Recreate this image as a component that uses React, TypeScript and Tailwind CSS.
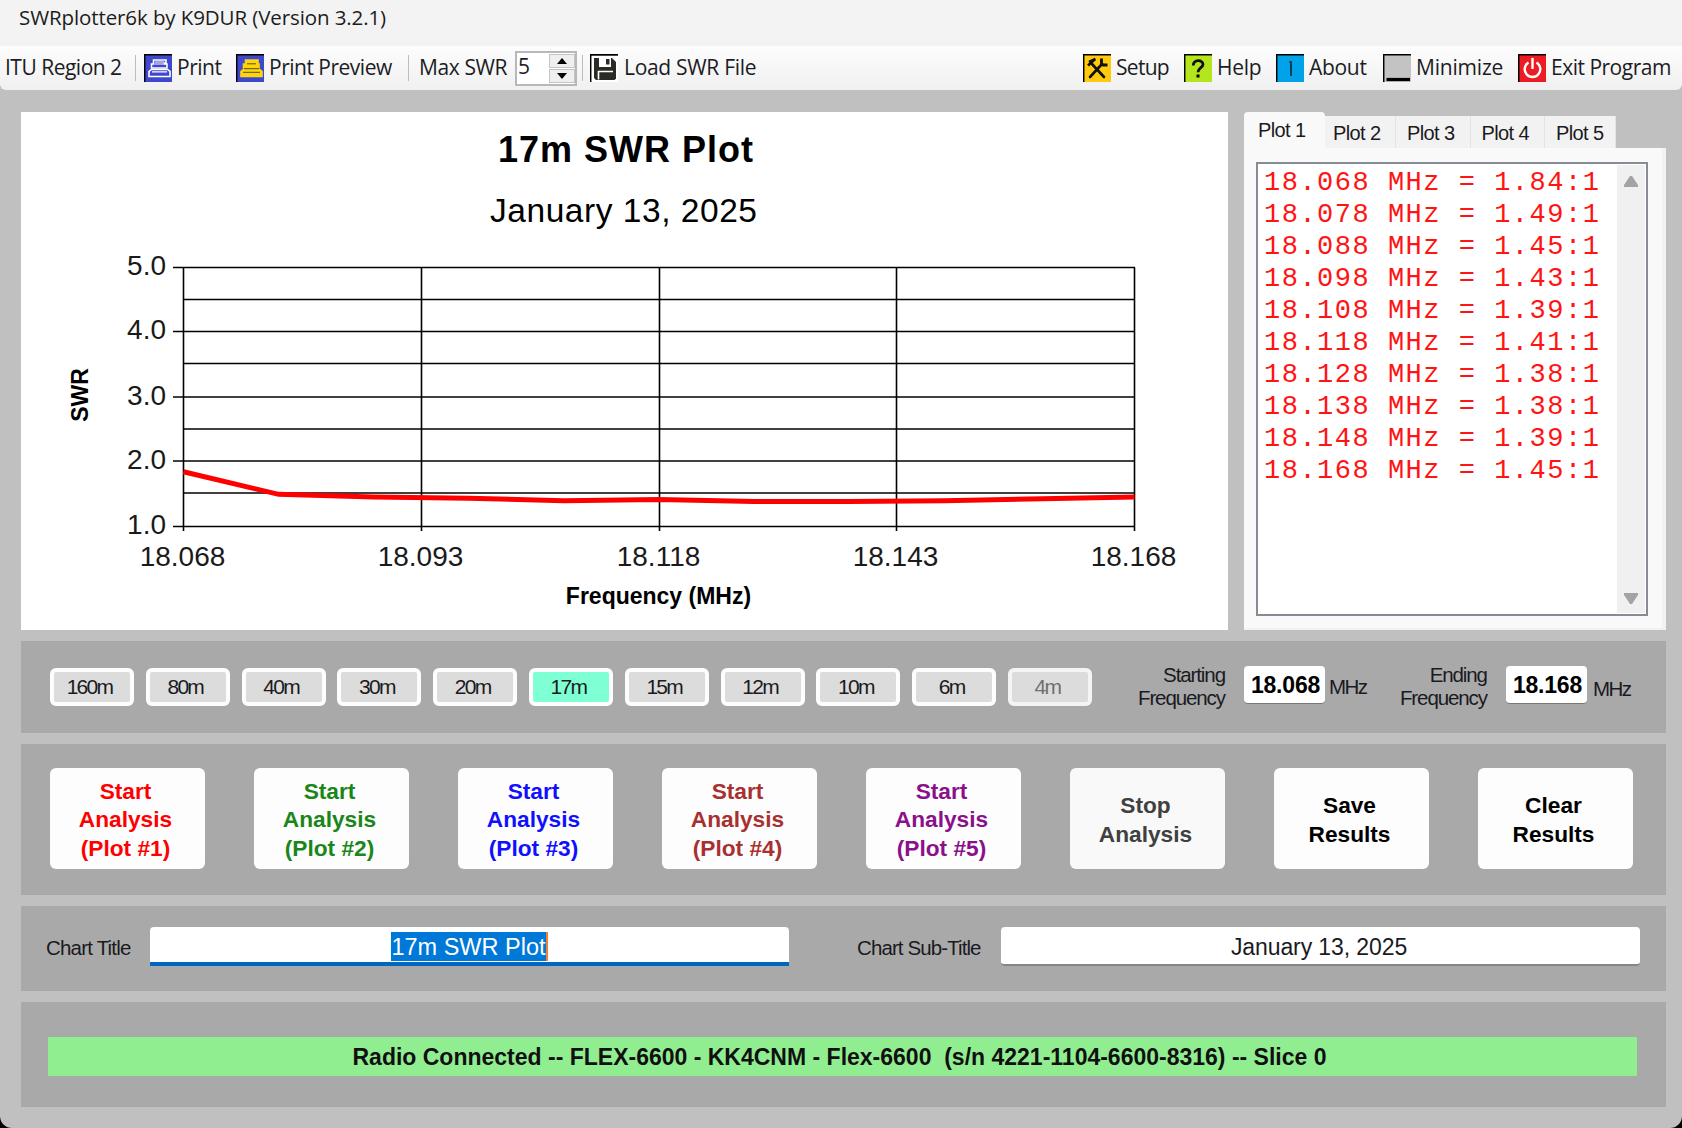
import type { ReactNode } from 'react'
import clsx from 'clsx'

const readings = [
    { freq: 18.068, swr: 1.84 },
    { freq: 18.078, swr: 1.49 },
    { freq: 18.088, swr: 1.45 },
    { freq: 18.098, swr: 1.43 },
    { freq: 18.108, swr: 1.39 },
    { freq: 18.118, swr: 1.41 },
    { freq: 18.128, swr: 1.38 },
    { freq: 18.138, swr: 1.38 },
    { freq: 18.148, swr: 1.39 },
    { freq: 18.168, swr: 1.45 },
]

const bands = ['160m', '80m', '40m', '30m', '20m', '17m', '15m', '12m', '10m', '6m', '4m']

const actions = [
    { lines: ['Start', 'Analysis', '(Plot #1)'], color: 'text-[#ff0000]' },
    { lines: ['Start', 'Analysis', '(Plot #2)'], color: 'text-[#1a861a]' },
    { lines: ['Start', 'Analysis', '(Plot #3)'], color: 'text-[#1010ff]' },
    { lines: ['Start', 'Analysis', '(Plot #4)'], color: 'text-[#a83030]' },
    { lines: ['Start', 'Analysis', '(Plot #5)'], color: 'text-[#8b108b]' },
    { lines: ['Stop', 'Analysis'], color: 'text-[#404040]', disabled: true },
    { lines: ['Save', 'Results'], color: 'text-black' },
    { lines: ['Clear', 'Results'], color: 'text-black' },
]

function IconBox({ bg, children }: { bg: string; children?: ReactNode }) {
    return (
        <svg viewBox="0 0 28 28" className="h-7 w-7 shrink-0">
            <rect width="28" height="28" fill={bg} />
            <path d="M0 .7H28M.7 0V28" stroke="#000" strokeWidth="1.5" />
            {children}
        </svg>
    )
}

function PrinterIcon({ filled }: { filled?: boolean }) {
    const color = filled ? '#ffd40a' : '#ffffff'

    return (
        <IconBox bg="#3f48cc">
            <g fill={filled ? color : 'none'} stroke={color} strokeWidth="1.6">
                <path d="M9.5 6H22V9H20.5V10H23V14H7.500V10H9.500Z" />
                <path d="M5 22.500V17.500L7.500 15.500H23.500L26 17.500V22.500Z" />
            </g>
            {filled ? (
                <path d="M11 9.800H20M7 18.300H24M8 14.700H23" stroke="#55511f" strokeWidth="1" />
            ) : (
                <path d="M10.500 10H20.500M8 17.800H23M11 8H20" stroke={color} strokeWidth="1.200" />
            )}
        </IconBox>
    )
}

function FloppyIcon() {
    return (
        <IconBox bg="#fff">
            <path d="M4 4H22L26 8V24.5L24.5 26H6L4 24Z" fill="#2b2b26" />
            <path d="M9 3H21V13H9Z" fill="#fff" />
            <path d="M16 5H19.5V10.5H16Z" fill="#2b2b26" />
            <path d="M0 .7H28" stroke="#000" strokeWidth="1.5" />
            <path d="M8.5 25.5V17.5H23" fill="none" stroke="#fff" strokeWidth="1.6" />
        </IconBox>
    )
}

function ToolsIcon() {
    return (
        <IconBox bg="#ffc90e">
            <path d="M9 10L21 23" stroke="#111" strokeWidth="2.6" strokeLinecap="round" />
            <path d="M7 23L19 10" stroke="#111" strokeWidth="2.6" strokeLinecap="round" />
            <path d="M5 11.5L11.5 5.5M6 8L12.5 5" stroke="#111" strokeWidth="2.8" />
            <path d="M18.5 4.5V9.5L20 11H24.5" fill="none" stroke="#111" strokeWidth="2.8" />
        </IconBox>
    )
}

function PowerIcon() {
    return (
        <IconBox bg="#ed1c24">
            <path d="M10.500 8.500A7.800 7.800 0 1 0 18.500 8.500M14.500 4V15" fill="none" stroke="#fff" strokeWidth="2.400" />
        </IconBox>
    )
}

function Separator() {
    return <div className="h-[26px] w-px shrink-0 bg-[#bdbdbd]" />
}

function Toolbar() {
    return (
        <div className="flex h-11 shrink-0 items-center rounded-b-md bg-linear-to-b from-[#fdfdfd] to-[#f0f0f0] font-['Open_Sans',sans-serif] text-[21px] leading-[42px] whitespace-nowrap text-[#1c1c24]">
            <span className="ml-[5px] w-[130px] pb-[2px] tracking-[-0.5px]">ITU Region 2</span>
            <Separator />
            <div className="ml-2 flex items-center">
                <PrinterIcon />
                <span className="ml-[5px] w-[59px] pb-[2px] tracking-[-0.5px]">Print</span>
                <PrinterIcon filled />
                <span className="ml-[5px] w-[139px] pb-[2px] tracking-[-0.5px]">Print Preview</span>
            </div>
            <Separator />
            <span className="ml-[10px] w-[96px] pb-[2px] tracking-[-0.400px]">Max SWR</span>
            <div className="flex h-[35px] w-[62px] border-2 border-[#b6b8bd] bg-white">
                <span className="w-8 pl-px leading-[26px]">5</span>
                <div className="flex w-[26px] flex-col gap-px py-px">
                    <div className="flex flex-1 items-center justify-center border border-[#c4c4c4] bg-[#efefef]">
                        <svg viewBox="0 0 10 6" className="h-[6px] w-[10px]"><path d="M0 6L5 0L10 6Z" /></svg>
                    </div>
                    <div className="flex flex-1 items-center justify-center border border-[#c4c4c4] bg-[#efefef]">
                        <svg viewBox="0 0 10 6" className="h-[6px] w-[10px]"><path d="M0 0L5 6L10 0Z" /></svg>
                    </div>
                </div>
            </div>
            <div className="ml-[5px] flex items-center gap-[7px]">
                <Separator />
                <FloppyIcon />
            </div>
            <span className="ml-[6px] pb-[2px] tracking-[-0.300px]">Load SWR File</span>

            <div className="ml-auto flex items-center gap-[5px]">
                <ToolsIcon />
                <span className="w-[63px] pb-[2px] tracking-[-0.700px]">Setup</span>
                <IconBox bg="#b5e61d">
                    <path d="M9.3 11.5C9.3 5 19 5.5 19 10.5C19 13.5 14 14 14 18.2" fill="none" stroke="#111" strokeWidth="2.8" />
                    <path d="M12.5 20.5H15.5V23.5H12.5Z" />
                </IconBox>
                <span className="w-[54px] pb-[2px] tracking-[-0.300px]">Help</span>
                <IconBox bg="#00a2e8">
                    <path d="M15 7V22M13.5 8H15" stroke="#12304a" strokeWidth="1.8" />
                </IconBox>
                <span className="w-[69px] pb-[2px] tracking-[-0.300px]">About</span>
                <IconBox bg="#c3c3c3">
                    <path d="M3.5 25.5H27" stroke="#000" strokeWidth="3.2" />
                </IconBox>
                <span className="w-[97px] pb-[2px] tracking-[-0.200px]">Minimize</span>
                <PowerIcon />
                <span className="w-[131px] pb-[2px] tracking-[-0.500px]">Exit Program</span>
            </div>
        </div>
    )
}

function Chart() {
    const xs = [162.5, 400.5, 638.5, 875.5, 1113.5]
    const ys = [155.5, 187.5, 219.5, 251.5, 285, 317, 349, 381, 414.5]
    const xLabels = ['18.068', '18.093', '18.118', '18.143', '18.168']
    const points = readings
        .map((r) => `${162.5 + (r.freq - 18.068) * 9510},${414 - (r.swr - 1) * 64.6}`)
        .join(' ')

    return (
        <svg viewBox="0 0 1207 518" className="h-[518px] w-[1207px] shrink-0 bg-white font-['Liberation_Sans',sans-serif]">
            <text x="477" y="49.500" fontSize="36" fontWeight="700" textLength="255">17m SWR Plot</text>
            <text x="469" y="110" fontSize="33.500" textLength="267">January 13, 2025</text>

            {ys.map((y, i) => (
                <line key={y} x1={i % 2 === 0 ? 152 : 162.5} x2="1114" y1={y} y2={y} stroke="#000" strokeWidth="1.6" />
            ))}
            {xs.map((x) => (
                <line key={x} x1={x} x2={x} y1="155.5" y2="419" stroke="#000" strokeWidth="1.6" />
            ))}
            <polyline points={points} fill="none" stroke="#ff0000" strokeWidth="5" />

            {['5.0', '4.0', '3.0', '2.0', '1.0'].map((label, i) => (
                <text key={label} x="145" y={ys[i * 2] + 7.500} fontSize="28" textAnchor="end" fill="#1a1a1a">{label}</text>
            ))}
            {xLabels.map((label, i) => (
                <text key={label} x={xs[i] - 1} y="454" fontSize="28" textAnchor="middle" fill="#1a1a1a">{label}</text>
            ))}
            <text x="637.500" y="491.500" fontSize="23" fontWeight="700" textAnchor="middle">Frequency (MHz)</text>
            <text transform="translate(67 283) rotate(-90)" fontSize="23" fontWeight="700" textAnchor="middle">SWR</text>
        </svg>
    )
}

function ResultsPanel() {
    return (
        <div className="flex h-[518px] w-[422px] flex-col text-[20px] tracking-[-0.6px] text-[#1a1a22]">
            <div className="flex h-9 items-end">
                <div className="h-9 w-[81px] rounded-t-sm bg-[#f9f9f9] pl-[14px] leading-[36px]">Plot 1</div>
                <div className="h-8 w-[71px] border-r border-[#e3e3e3] bg-[#f2f2f2] pl-[8px] leading-[34px]">Plot 2</div>
                {['Plot 3', 'Plot 4', 'Plot 5'].map((tab) => (
                    <div
                        key={tab}
                        className="h-8 w-[74.5px] border-r border-[#e3e3e3] bg-[#f2f2f2] pl-[11px] leading-[34px] last:w-[71px]"
                    >
                        {tab}
                    </div>
                ))}
            </div>
            <div className="flex-1 border-r-4 border-b-2 border-[#f2f2f2] bg-[#f9f9f9] pt-[14px] pl-3">
                <div className="flex h-[454px] w-[392px] justify-between border-2 border-[#868b94] bg-white p-px">
                    <div className="pt-[2px] pl-[5px] font-['Liberation_Mono',monospace] text-[27px] leading-8 tracking-[1.5px] whitespace-pre text-[#ff1414]">
                        {readings.map((r) => (
                            <div key={r.freq}>{`${r.freq.toFixed(3)} MHz = ${r.swr.toFixed(2)}:1`}</div>
                        ))}
                    </div>
                    <div className="flex w-[28px] flex-col items-center justify-between bg-[#f0f0f0] pt-[11px] pb-[9px]">
                        <svg viewBox="0 0 14 11" className="h-[11px] w-[14px]"><path d="M6 0H8L14 9V11H0V9Z" fill="#a3a3a3" /></svg>
                        <svg viewBox="0 0 14 11" className="h-[11px] w-[14px]"><path d="M6 11H8L14 2V0H0V2Z" fill="#a3a3a3" /></svg>
                    </div>
                </div>
            </div>
        </div>
    )
}

function FrequencyField({ label, value }: { label: string; value: string }) {
    return (
        <>
            <div className="-mt-[2px] text-right text-[20.5px] leading-[23px] tracking-[-1.1px]">
                {label}
                <br />
                Frequency
            </div>
            <div className="mt-px ml-[19px] h-[38px] w-[81px] rounded-sm border-b border-[#777] bg-white pl-[7px] text-[23px] leading-[39px] font-bold tracking-[-0.2px] text-black">
                {value}
            </div>
        </>
    )
}

function BandPanel() {
    return (
        <div className="flex h-[92px] shrink-0 bg-[#a9a9a9] pl-[29px] text-[#1a1a22]">
            <div className="flex gap-[11.8px] pt-[27px]">
                {bands.map((band) => (
                    <button
                        key={band}
                        disabled={band === '4m'}
                        className={clsx(
                            'h-[38px] w-[84px] rounded-md border-4 pr-[5px] text-[21px] leading-[30px] tracking-[-1.7px]',
                            band === '17m' ? 'bg-[#7fffd4]' : 'bg-[#dcdcdc]',
                            band === '4m' ? 'border-[#f4f4f4] text-[#707070]' : 'border-[#fdfdfd]',
                        )}
                    >
                        {band}
                    </button>
                ))}
            </div>
            <div className="ml-[46px] flex pt-[24px]">
                <FrequencyField label="Starting" value="18.068" />
                <span className="ml-[4px] w-[71px] text-[20.5px] leading-[43px] tracking-[-1.5px]">MHz</span>
                <FrequencyField label="Ending" value="18.168" />
                <span className="ml-[6px] text-[20.5px] leading-[47px] tracking-[-1.5px]">MHz</span>
            </div>
        </div>
    )
}

function ActionPanel() {
    return (
        <div className="flex h-[151px] shrink-0 justify-between bg-[#a9a9a9] pt-[24px] pr-[33px] pl-[29px]">
            {actions.map((action, i) => (
                <button
                    key={i}
                    disabled={action.disabled}
                    className={clsx(
                        'h-[101px] w-[155px] rounded-md pt-[2px] pr-1 text-[22.7px] leading-[28.4px] font-bold',
                        action.disabled ? 'bg-[#f9f9f9]' : 'bg-[#fdfdfd]',
                        action.color,
                    )}
                >
                    {action.lines.map((line) => (
                        <div key={line}>{line}</div>
                    ))}
                </button>
            ))}
        </div>
    )
}

function TitlePanel() {
    return (
        <div className="flex h-[85px] shrink-0 bg-[#a9a9a9] pt-[21px] pl-[25px] text-[20.5px] leading-[42px] text-[#1a1a22]">
            <span className="w-[104px] tracking-[-0.8px]">Chart Title</span>
            <div className="flex h-[39px] w-[639px] justify-center rounded-t-sm border-b-4 border-[#0067c0] bg-white pt-[5px]">
                <span className="h-[29px] border-r-2 border-[#e8833a] bg-[#0078d7] text-[23.5px] leading-[30px] text-white">17m SWR Plot</span>
            </div>
            <span className="ml-[68px] w-[144px] tracking-[-0.9px]">Chart Sub-Title</span>
            <div className="h-[39px] w-[639px] rounded-sm border-b-2 border-[#868686] bg-white pr-[3px] text-center text-[23px] leading-[41px] tracking-[-0.1px]">
                January 13, 2025
            </div>
        </div>
    )
}

export default function App() {
    return (
        <div className="h-[1128px] w-[1682px] overflow-hidden bg-black">
            <div className="flex h-full flex-col rounded-b-xl bg-[#c0c0c0] font-['Liberation_Sans',sans-serif]">
                {/* Window caption */}
                <div className="h-[46px] shrink-0 bg-[#f3f3f3] pl-[19px] font-['Open_Sans',sans-serif] text-[20.5px] leading-[35px] tracking-[-0.1px] text-[#1c1c1c]">
                    SWRplotter6k by K9DUR (Version 3.2.1)
                </div>
                <Toolbar />

                <div className="flex flex-col pt-[22px] pr-[16px] pl-[21px]">
                    <div className="mb-[11px] flex gap-4">
                        <Chart />
                        <ResultsPanel />
                    </div>
                    <div className="flex flex-col gap-[11px]">
                        <BandPanel />
                        <ActionPanel />
                        <TitlePanel />
                        {/* Radio status */}
                        <div className="h-[105px] bg-[#a9a9a9] pt-[35px] pr-[29px] pl-[27px]">
                            <div className="h-[39px] bg-[#90ee90] pr-[6px] text-center text-[23px] leading-[41px] font-bold whitespace-pre text-[#101010]">
                                {'Radio Connected -- FLEX-6600 - KK4CNM - Flex-6600  (s/n 4221-1104-6600-8316) -- Slice 0'}
                            </div>
                        </div>
                    </div>
                </div>
            </div>
        </div>
    )
}
